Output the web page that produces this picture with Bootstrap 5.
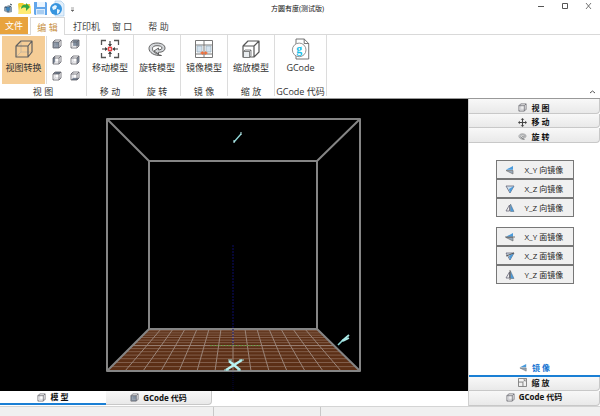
<!DOCTYPE html>
<html lang="zh-CN">
<head>
<meta charset="utf-8">
<meta name="viewport" content="width=device-width, initial-scale=1">
<title>方圆有度(测试版)</title>
<link href="https://cdn.jsdelivr.net/npm/bootstrap@5.3.0/dist/css/bootstrap.min.css" rel="stylesheet">
<style>
body{font-family:"Open Sans","Noto Sans CJK SC",sans-serif;font-size:9px;line-height:12px;color:#333;background:#fff}
button{font:inherit;color:inherit;background:none;border:0;padding:0}
svg{display:block;flex:none}
.titlebar{height:17px}
.app-title{font-size:7px;line-height:18px;color:#111}
.window-buttons{gap:15px;padding:2px 7px 0 0}
.quick{gap:3px;padding-left:2px}
.quick svg{width:13px;height:13px}
.menu-tabs{height:18px;border-bottom:1px solid #d9d9d9}
.menu-tabs button{height:18px;padding-top:2px;color:#444}
.menu-tabs .file-tab{width:28px;height:17px;padding-top:0;background:#e8a33d;color:#fff}
.menu-tabs .active-tab{width:35px;background:#fff;color:#c8903f;border:1px solid #d9d9d9;border-bottom:0;margin-left:2px}
.ribbon{height:64px;border-bottom:1px solid #999}
.group{width:47px;height:61px;border-right:1px solid #dcdcdc;padding-top:1px}
.group.views{width:87px}
.group.code{width:52px}
.tool{height:48px;padding-top:3px;display:flex;flex-direction:column;align-items:center;gap:3px;white-space:nowrap}
.tool svg{width:20px;height:20px}
.tool.on{width:43px;background:#f5cd96;margin-left:2px}
.mini{width:39px;margin-left:1px;padding-left:1px;border-left:1px solid #dcdcdc;display:grid;grid-template-columns:18px 18px;grid-auto-rows:16px}
.mini button{display:flex;align-items:center;justify-content:center}
.mini svg{width:10px;height:10px}
.caption{line-height:11px;margin-top:2px;white-space:nowrap}
.stage{background:#000}
.stage svg{width:100%;height:100%}
.side{width:132px;border-left:1px solid #d0d0d0}
.strip{font-weight:700;font-size:8px;line-height:12px;color:#111;display:flex;align-items:center;justify-content:center;gap:4px;border:1px solid #c8c8c8!important;border-width:0 1px 1px 0!important;border-radius:0 0 4px 0;background:linear-gradient(#f8f8f8,#e9e9e9)!important}
.side .strip{height:15px;width:100%}
.side .short{height:14px}
.side .upper{padding-top:3px}
.side .lower{padding-bottom:2px}
.strip svg{width:9px;height:9px}
.side .strip.on,.doc-tabs .strip.on{background:#fff!important;border-width:0 0 2px 0!important;border-color:#1a7fd4!important;border-radius:0}
.side .strip.on{color:#1373d1}
.mirrors{padding-top:17px}
.mirrors .set{width:78px;margin-bottom:10px}
.mirrors button{height:19px;width:100%;background:#f0f0f0;border:1px solid #777;font-size:8px;display:flex;align-items:center;padding-left:8px;color:#222}
.mirrors svg{width:10px;height:10px;margin-right:10px}
.doc-tabs{height:15px}
.doc-tabs .strip{width:106px;height:14px}
.status{height:10px;background:#f0f0f0;border-top:1px solid #d4d4d4}
.status .cell{width:214px;border-right:1px solid #c8c8c8}
.status .cell.mid{width:107px}
</style>
<script src="https://cdn.jsdelivr.net/npm/bootstrap@5.3.0/dist/js/bootstrap.bundle.min.js"></script>
</head>
<body>
<svg width="0" height="0" class="position-absolute" aria-hidden="true">
<defs>
<symbol id="cube" viewBox="0 0 20 20"><g fill="none" stroke="#606060" stroke-width="1.200" stroke-linejoin="round"><path d="M7 3v10h10M7 13l-4 4" stroke="#c5b5a0" stroke-width=".8"/><path d="M2 7h12v11H2zM2 7l5-5h11l-4 5M18 2v11l-4 5"/></g></symbol>
<symbol id="box" viewBox="0 0 10 10"><path d="M3 1v6h6M3 7L1 9" fill="none" stroke="#b4b4bc" stroke-width=".6"/><path d="M1 3h6v6H1zM1 3l2-2h6v6L7 9M7 3l2-2" fill="none" stroke="#606068" stroke-width=".8"/></symbol>
<symbol id="turn" viewBox="0 0 20 20"><path d="M14.500 16.500C7 17 2 13.500 2 9.500 2 6 5.500 4 10 4s8 2 8 5-3 4.300-6.500 4.300V15L7 12l4.500-3v1.800c2 0 3.500-.6 3.500-1.800 0-1.500-2-2.300-5-2.300S5.500 7.800 5.500 9.700c0 3 3.500 5.300 9 6.800z" fill="#d4d7da" stroke="#555" stroke-width=".9" stroke-linejoin="round"/></symbol>
<symbol id="arrows" viewBox="0 0 10 10"><path d="M5 0L3 2h1.400v2.400H2V3L0 5l2 2V5.600h2.400V8H3l2 2 2-2H5.600V5.600H8V7l2-2-2-2v1.400H5.600V2H7z" fill="#444"/></symbol>
<symbol id="mxy" viewBox="0 0 10 10"><path d="M1 4.700L8 1v3.700z" fill="#4a9bdc"/><path d="M1 5.500h7V9z" fill="#9ab" stroke="#666" stroke-width=".6"/></symbol>
<symbol id="mxz" viewBox="0 0 10 10"><path d="M1 2h8L5 9z" fill="#cfe0ee" stroke="#667" stroke-width=".8"/><path d="M4 5l5-3-4 7z" fill="#4a9bdc"/></symbol>
<symbol id="myz" viewBox="0 0 10 10"><path d="M4.500 2v6H1z" fill="#eee" stroke="#667" stroke-width=".8"/><path d="M5.500 1L9 8.500H5.500z" fill="#4a9bdc" stroke="#567" stroke-width=".5"/></symbol>
</defs>
</svg>
<div class="d-flex flex-column vh-100 overflow-hidden">
<header>
<div class="titlebar row g-0 flex-nowrap">
<div class="col d-flex align-items-center quick">
<svg viewBox="0 0 13 13"><path d="M2 5l5-2 3 2v5l-4 1-4-2z" fill="#8a9bab"/><path d="M3 5l3 1 3-2M6 6v4" stroke="#334d66" fill="none"/><circle cx="6" cy="7" r="2" fill="#3b83bb"/><path d="M8 2l2 1" stroke="#345"/></svg>
<svg viewBox="0 0 13 13"><path d="M0 2l1-1h4l1 1h6l1 9-1 1H1z" fill="#f2cf35"/><path d="M0 12l2-7 11-1-1 8z" fill="#ffeb73"/><path d="M3 7c0-4 3-5 5-4V1l4 4-4 4V6C6 5 4 6 3 7z" fill="#32a744"/></svg>
<svg viewBox="0 0 13 13"><path d="M0 0h12l1 1v12H1l-1-1z" fill="#62a6eb"/><path d="M3 0h8v5H3z" fill="#eaf5ff"/><path d="M2 7h9v6H2z" fill="#dcecfb"/><path d="M3 9h7M3 11h7" stroke="#75aee7"/></svg>
<svg viewBox="0 0 13 13" overflow="visible"><path d="M5-1h6l3 3v12H5z" fill="#e2effb" stroke="#9bc4e8" stroke-width=".6"/><circle cx="6" cy="7" r="6" fill="#3795df"/><path d="M2 5l3-2 2 1-1 3-3 1zM7 7l3 1-1 3-2 1z" fill="#e6f6ff"/></svg>
<svg viewBox="0 0 13 13"><path d="M5 6h3M5 8h3L6.500 9.500z" stroke="#666" stroke-width=".6" fill="#666"/></svg>
</div>
<div class="col-auto app-title">方圆有度(测试版)</div>
<div class="col d-flex justify-content-end align-items-start window-buttons">
<button type="button" aria-label="最小化"><svg width="9" height="9" viewBox="0 0 9 9"><path d="M2 4.500h6" stroke="#555"/></svg></button>
<button type="button" aria-label="最大化"><svg width="9" height="9" viewBox="0 0 9 9"><path d="M2.500 1.500h5v5h-5z" fill="none" stroke="#555"/></svg></button>
<button type="button" aria-label="关闭"><svg width="9" height="9" viewBox="0 0 9 9"><path d="M2 1l5 6M7 1L2 7" stroke="#555" stroke-width=".8"/></svg></button>
</div>
</div>
<nav class="menu-tabs d-flex">
<button type="button" class="file-tab">文件</button>
<button type="button" class="active-tab">编 辑</button>
<button type="button" class="px-2">打印机</button>
<button type="button" class="px-1">窗 口</button>
<button type="button" class="px-2 ms-1">帮 助</button>
</nav>
<div class="ribbon d-flex">
<div class="group views d-flex flex-column">
<div class="d-flex">
<button type="button" class="tool on"><svg><use href="#cube"/></svg>视图转换</button>
<div class="mini">
<button type="button" aria-label="前"><svg viewBox="0 0 10 10"><path d="M1 3h6v6H1z" fill="#8291a2"/><use href="#box"/></svg></button>
<button type="button" aria-label="后"><svg viewBox="0 0 10 10"><path d="M3 1h6v6H3z" fill="#8291a2"/><use href="#box"/></svg></button>
<button type="button" aria-label="左"><svg viewBox="0 0 10 10"><path d="M1 3l2-2v6L1 9z" fill="#68788a"/><use href="#box"/></svg></button>
<button type="button" aria-label="右"><svg viewBox="0 0 10 10"><path d="M7 3l2-2v6L7 9z" fill="#8291a2"/><use href="#box"/></svg></button>
<button type="button" aria-label="上"><svg viewBox="0 0 10 10"><path d="M1 3l2-2h6L7 3z" fill="#68788a"/><use href="#box"/></svg></button>
<button type="button" aria-label="下"><svg viewBox="0 0 10 10"><path d="M1 9l2-2h6L7 9z" fill="#68788a"/><use href="#box"/></svg></button>
</div>
</div>
<div class="caption text-center">视 图</div>
</div>
<div class="group"><button type="button" class="tool w-100"><svg viewBox="0 0 20 20"><path d="M1.500 6V1.500H6M14 1.500h4.500V6M18.500 14v4.500H14M6 18.500H1.500V14" fill="none" stroke="#555" stroke-width="1.300"/><path d="M10 2v5M10 13v5M2 10h5M13 10h5" stroke="#444" stroke-width="1.200"/><path d="M8 5h4l-2 3zM8 15h4l-2-3zM5 8v4l3-2zM15 8v4l-3-2z" fill="#444"/><path d="M8.500 8.500h3v3h-3z" fill="#fff" stroke="#ef4444" stroke-width="1.300"/></svg>移动模型</button><div class="caption text-center">移 动</div></div>
<div class="group"><button type="button" class="tool w-100"><svg><use href="#turn"/></svg>旋转模型</button><div class="caption text-center">旋 转</div></div>
<div class="group"><button type="button" class="tool w-100"><svg viewBox="0 0 20 20"><path d="M1.500 1.500h17v17h-17zM10 1.500v17M1.500 6h17M1.500 15h17" fill="none" stroke="#777"/><path d="M3 7h5v6H3zM12 7h5v6h-5z" fill="#d5e3ef" stroke="#97a9b9" stroke-width=".7"/><path d="M6 14l3-2v1.300h2V12l3 2-3 2v-1.300H9V16z" fill="#ec7140"/></svg>镜像模型</button><div class="caption text-center">镜 像</div></div>
<div class="group"><button type="button" class="tool w-100"><svg viewBox="0 0 20 20"><path d="M2 7h11v11H2zM2 7l5-5h11l-5 5M18 2v11l-5 5" fill="none" stroke="#555" stroke-width="1.200" stroke-linejoin="round"/><path d="M2.500 12.500h6v6h-6zM2.500 12.500L4 11h6v6l-1.500 1.500M8.500 12.500L10 11" fill="#e9edf0" stroke="#666" stroke-width=".8"/></svg>缩放模型</button><div class="caption text-center">缩 放</div></div>
<div class="group code"><button type="button" class="tool w-100"><svg viewBox="0 -1 21 22" overflow="visible"><path d="M5-1h9l5 5v17H5z" fill="#fff" stroke="#666"/><path d="M14-1v5h5" fill="none" stroke="#666"/><circle cx="8.500" cy="11" r="7.500" fill="#fff" stroke="#888"/><text x="8.500" y="14" text-anchor="middle" font-family="Liberation Serif" font-size="13" font-weight="700" fill="#18bfe8">g</text></svg>GCode</button><div class="caption text-center">GCode 代码</div></div>
<button type="button" class="ms-auto align-self-end pe-1 pb-1" aria-label="收起"><svg width="7" height="4" viewBox="0 0 7 4"><path d="M1 3l2.500-2L6 3" fill="none" stroke="#555"/></svg></button>
</div>
</header>
<div class="d-flex flex-fill overflow-hidden">
<main class="d-flex flex-column flex-fill overflow-hidden">
<div class="stage flex-fill overflow-hidden">
<svg viewBox="0 99 468 292" role="img" aria-label="打印空间">
<path d="M149 329H318L360 371H107z" fill="#5c2f16"/>
<path d="M112 366.600H355M116 362.500H351M120 358.700H347M123 355.100H344M127 351.700H340M130 348.600H337M136 342.700H331M138 340.100H328M141 337.500H326M143 335.200H324M146 332.900H321M148 330.700H319" stroke="#8a6a58" stroke-width=".8"/>
<path d="M161 329L125 371M173 329L143 371M185 329L161 371M197 329L179 371M209 329L197 371M221 329L215 371M245 329L251 371M257 329L269 371M269 329L287 371M281 329L305 371M293 329L323 371M305 329L341 371M133 345.600H334M233 329v42" stroke="#9b8579" fill="none"/>
<path d="M210 345.600h50" stroke="#64903e" stroke-dasharray="2 1"/>
<path d="M107 119H360V371H107zM149 161H317V329H149zM107 119L149 161M360 119L317 161M107 371L149 329M360 371L317 329" fill="none" stroke="#858585" stroke-width="2" stroke-linejoin="round"/>
<path d="M233 245V345" stroke="#0c0c68" stroke-dasharray="2 1"/><path d="M233 372v19" stroke="#05053a" stroke-dasharray="1 1"/>
<path d="M234 142l7-8" stroke="#91dada" stroke-width="1.400"/><path d="M234 140v3M241 132v3" stroke="#c0f3f3"/>
<path d="M338 345l5-5" stroke="#91dada" stroke-width="1.600"/><path d="M342 341l7-6M343 341l6-3" stroke="#a8e6e4" stroke-width="1.800"/>
<path d="M226 370l16-10M229 361l11 9" stroke="#b9f4f2" stroke-width="2.400"/><path d="M224 370h5M239 360h5M228 360h4M237 370h4" stroke="#a0dcdc"/>
</svg>
</div>
<div class="doc-tabs d-flex">
<button type="button" class="strip on"><svg><use href="#box"/></svg>模 型</button>
<button type="button" class="strip"><svg viewBox="0 0 10 10"><path d="M1 3h6v6H1z" fill="#8291a2"/><use href="#box"/></svg>GCode 代码</button>
</div>
</main>
<aside class="side d-flex flex-column flex-shrink-0">
<button type="button" class="strip upper"><svg><use href="#box"/></svg>视 图</button>
<button type="button" class="strip short upper"><svg><use href="#arrows"/></svg>移 动</button>
<button type="button" class="strip upper"><svg><use href="#turn"/></svg>旋 转</button>
<div class="mirrors flex-fill d-flex flex-column align-items-center">
<div class="set">
<button type="button"><svg><use href="#mxy"/></svg>X_Y 向镜像</button>
<button type="button"><svg><use href="#mxz"/></svg>X_Z 向镜像</button>
<button type="button"><svg><use href="#myz"/></svg>Y_Z 向镜像</button>
</div>
<div class="set">
<button type="button"><svg viewBox="0 0 10 10"><use href="#mxy"/><path d="M0 5h10" stroke="#555" stroke-width=".8"/></svg>X_Y 面镜像</button>
<button type="button"><svg viewBox="0 0 10 10"><use href="#mxz"/><path d="M1 5l8-3" stroke="#555"/></svg>X_Z 面镜像</button>
<button type="button"><svg viewBox="0 0 10 10"><use href="#myz"/><path d="M5 0v10" stroke="#555" stroke-width=".8"/></svg>Y_Z 面镜像</button>
</div>
</div>
<button type="button" class="strip on lower"><svg><use href="#mxy"/></svg>镜 像</button>
<button type="button" class="strip short lower"><svg viewBox="0 0 10 10"><path d="M.5.500h9v9h-9zM.5 4.500h5v5" fill="none" stroke="#777"/><path d="M6 4l2-2M6 2h2v2" fill="none" stroke="#777" stroke-width=".8"/></svg>缩 放</button>
<button type="button" class="strip lower"><svg><use href="#box"/></svg>GCode 代码</button>
</aside>
</div>
<footer class="status d-flex"><div class="cell"></div><div class="cell mid"></div></footer>
</div>
</body>
</html>
